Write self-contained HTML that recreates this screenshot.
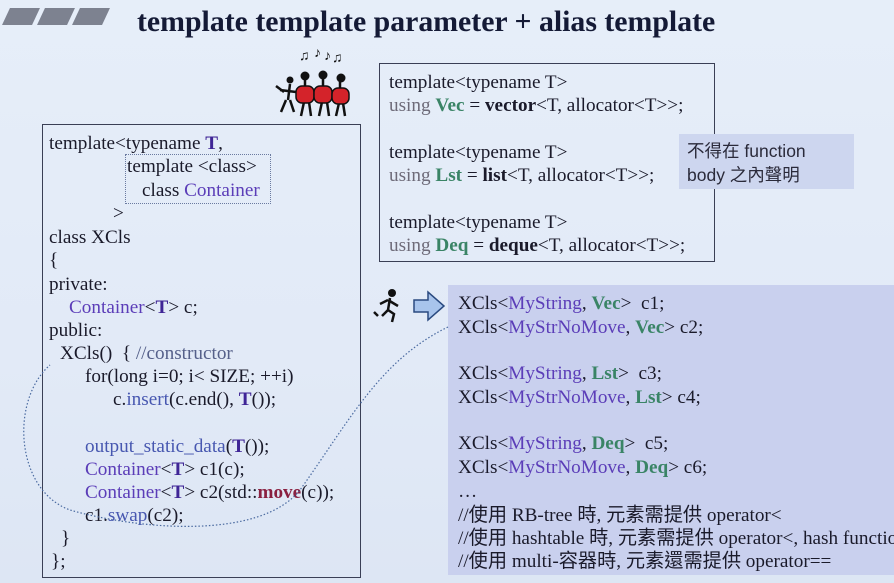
<!DOCTYPE html>
<html><head><meta charset="utf-8"><style>
body{margin:0;width:894px;height:583px;overflow:hidden;background:linear-gradient(180deg,#e6eef9 0%,#e2eaf7 60%,#dde6f4 100%);font-family:"Liberation Serif","Noto Serif CJK SC",serif;color:#1a1a2a;position:relative}
.a{position:absolute;white-space:pre;font-size:19.2px;line-height:23px}
.p{color:#5b3db8}.T{color:#3f2596;font-weight:bold}.g{color:#3a8466;font-weight:bold}.u{color:#6d6a78}.b{color:#4757b0}.c{color:#55608a}
.box{position:absolute;border:1.5px solid #3a3f55}
.cj{font-family:"Liberation Sans","Noto Sans CJK TC",sans-serif}
</style></head><body>
<div style="position:absolute;left:6px;top:8px;width:30px;height:17px;background:#7d8290;transform:skewX(-25deg)"></div>
<div style="position:absolute;left:41px;top:8px;width:30px;height:17px;background:#7d8290;transform:skewX(-25deg)"></div>
<div style="position:absolute;left:76px;top:8px;width:30px;height:17px;background:#7d8290;transform:skewX(-25deg)"></div>
<div class="a" style="left:137px;top:5px;font-size:29.8px;line-height:34px;font-weight:bold;color:#141a36">template template parameter + alias template</div>

<svg style="position:absolute;left:268px;top:44px" width="90" height="76" viewBox="0 0 90 76">
<g fill="#111"><text x="31" y="16" font-size="14">♫</text><text x="46" y="13" font-size="14">♪</text><text x="56" y="16" font-size="14">♪</text><text x="64" y="18" font-size="14">♫</text></g>
<g stroke="#111" stroke-width="2.5" fill="none"><path d="M22 40 L20 56 M12 46 L28 48 M18 56 l-5 12 M22 56 l4 12 M8 42 l8 6"/>
<path d="M37 36 v8 M36 58 l-3 14 M41 58 l2 14"/><path d="M55 35 v8 M54 58 l-3 14 M59 58 l2 14"/><path d="M72 38 v8 M71 59 l-3 13 M75 59 l2 13"/></g>
<g fill="#111"><circle cx="22" cy="36" r="3.5"/><circle cx="37" cy="32" r="4.5"/><circle cx="55" cy="31" r="4.5"/><circle cx="73" cy="34" r="4.5"/></g>
<g fill="#d4232a" stroke="#111" stroke-width="1.5"><rect x="28" y="42" width="18" height="17" rx="6"/><rect x="46" y="42" width="18" height="17" rx="6"/><rect x="64" y="44" width="17" height="16" rx="6"/></g>
</svg>

<div class="box" style="left:42px;top:124px;width:317px;height:452px"></div>
<div style="position:absolute;left:125px;top:154px;width:144px;height:48px;border:1px dotted #6a7aa0"></div>
<div class="a" style="left:49px;top:132px">template&lt;typename <span class="T">T</span>,</div>
<div class="a" style="left:127px;top:155px">template &lt;class&gt;</div>
<div class="a" style="left:142px;top:179px">class <span class="p">Container</span></div>
<div class="a" style="left:113px;top:202px">&gt;</div>
<div class="a" style="left:49px;top:226px">class XCls</div>
<div class="a" style="left:49px;top:249px">{</div>
<div class="a" style="left:49px;top:273px">private:</div>
<div class="a" style="left:69px;top:296px"><span class="p">Container</span>&lt;<span class="T">T</span>&gt; c;</div>
<div class="a" style="left:49px;top:319px">public:</div>
<div class="a" style="left:60px;top:342px">XCls()  { <span class="c">//constructor</span></div>
<div class="a" style="left:85px;top:365px">for(long i=0; i&lt; SIZE; ++i)</div>
<div class="a" style="left:113px;top:388px">c.<span class="b">insert</span>(c.end(), <span class="T">T</span>());</div>
<div class="a" style="left:85px;top:435px"><span class="b">output_static_data</span>(<span class="T">T</span>());</div>
<div class="a" style="left:85px;top:458px"><span class="p">Container</span>&lt;<span class="T">T</span>&gt; c1(c);</div>
<div class="a" style="left:85px;top:481px"><span class="p">Container</span>&lt;<span class="T">T</span>&gt; c2(std::<b style="color:#8a2040">move</b>(c));</div>
<div class="a" style="left:85px;top:504px">c1.<span class="b">swap</span>(c2);</div>
<div class="a" style="left:61px;top:527px">}</div>
<div class="a" style="left:51px;top:550px">};</div>

<div class="box" style="left:379px;top:63px;width:334px;height:197px"></div>
<div class="a" style="left:389px;top:71px">template&lt;typename T&gt;</div>
<div class="a" style="left:389px;top:94px"><span class="u">using</span> <span class="g">Vec</span> = <b>vector</b>&lt;T, allocator&lt;T&gt;&gt;;</div>
<div class="a" style="left:389px;top:141px">template&lt;typename T&gt;</div>
<div class="a" style="left:389px;top:164px"><span class="u">using</span> <span class="g">Lst</span> = <b>list</b>&lt;T, allocator&lt;T&gt;&gt;;</div>
<div class="a" style="left:389px;top:211px">template&lt;typename T&gt;</div>
<div class="a" style="left:389px;top:234px"><span class="u">using</span> <span class="g">Deq</span> = <b>deque</b>&lt;T, allocator&lt;T&gt;&gt;;</div>

<div style="position:absolute;left:679px;top:134px;width:175px;height:55px;background:#cdd6ef"></div>
<div class="a cj" style="left:687px;top:139px;font-size:17.5px;line-height:24px;color:#2a2a3a">不得在 function
body 之內聲明</div>

<svg style="position:absolute;left:372px;top:286px" width="76" height="42" viewBox="0 0 76 42">
<g stroke="#111" stroke-width="2.5" fill="none"><path d="M18 12 L16 24 L10 30 M16 24 L22 28 L20 36 M16 14 L8 18 M16 14 L26 20 M6 30 L2 26"/></g>
<circle cx="20" cy="7" r="4" fill="#111"/>
<path d="M42 14 H56 V6 L72 20 L56 34 V26 H42 Z" fill="#a8c4ec" stroke="#2a4a80" stroke-width="1.5"/>
</svg>

<div style="position:absolute;left:448px;top:285px;width:446px;height:290px;background:#c9d0ee"></div>
<div class="a" style="left:458px;top:292px">XCls&lt;<span class="p">MyString</span>, <span class="g">Vec</span>&gt;  c1;</div>
<div class="a" style="left:458px;top:316px">XCls&lt;<span class="p">MyStrNoMove</span>, <span class="g">Vec</span>&gt; c2;</div>
<div class="a" style="left:458px;top:362px">XCls&lt;<span class="p">MyString</span>, <span class="g">Lst</span>&gt;  c3;</div>
<div class="a" style="left:458px;top:386px">XCls&lt;<span class="p">MyStrNoMove</span>, <span class="g">Lst</span>&gt; c4;</div>
<div class="a" style="left:458px;top:432px">XCls&lt;<span class="p">MyString</span>, <span class="g">Deq</span>&gt;  c5;</div>
<div class="a" style="left:458px;top:456px">XCls&lt;<span class="p">MyStrNoMove</span>, <span class="g">Deq</span>&gt; c6;</div>
<div class="a" style="left:458px;top:480px">…</div>
<div class="a" style="left:458px;top:504px;font-family:'Liberation Serif','Noto Sans CJK TC',serif">//使用 RB-tree 時, 元素需提供 operator&lt;</div>
<div class="a" style="left:458px;top:527px;font-family:'Liberation Serif','Noto Sans CJK TC',serif">//使用 hashtable 時, 元素需提供 operator&lt;, hash function</div>
<div class="a" style="left:458px;top:550px;font-family:'Liberation Serif','Noto Sans CJK TC',serif">//使用 multi-容器時, 元素還需提供 operator==</div>

<svg style="position:absolute;left:0;top:0" width="894" height="583"><path d="M448 327 C380 360 350 420 300 490 C260 540 140 530 70 510 C15 490 10 400 50 365" fill="none" stroke="#4a6aa0" stroke-width="1.2" stroke-dasharray="1.5 2"/></svg>
</body></html>
